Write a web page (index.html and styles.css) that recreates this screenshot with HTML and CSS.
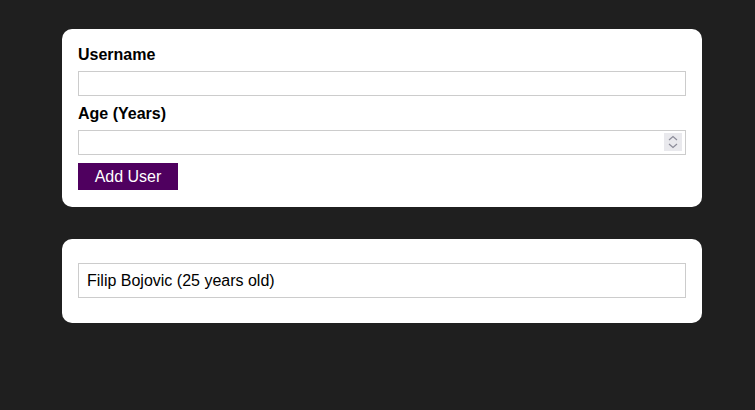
FILE: index.html
```html
<!DOCTYPE html>
<html>
<head>
<meta charset="utf-8">
<link rel="stylesheet" href="styles.css">
</head>
<body>
<div class="page">
  <form class="card form-card">
    <label class="label" for="username">Username</label>
    <input class="field" id="username" type="text">
    <label class="label" for="age">Age (Years)</label>
    <div class="num-wrap">
      <input class="field" id="age" type="text">
      <span class="spin">
        <svg width="18" height="18" viewBox="0 0 18 18"><path d="M5 7 L9 3.5 L13 7" fill="none" stroke="#8c8c99" stroke-width="1.2"/><path d="M5 11 L9 14.5 L13 11" fill="none" stroke="#8c8c99" stroke-width="1.2"/></svg>
      </span>
    </div>
    <button class="btn" type="button">Add User</button>
  </form>
  <div class="card list-card">
    <ul class="users">
      <li class="user">Filip Bojovic (25 years old)</li>
    </ul>
  </div>
</div>
</body>
</html>
```
FILE: styles.css
```css
* { box-sizing: border-box; }
html, body { margin: 0; padding: 0; }
body {
  background: #1f1f1f;
  font-family: "Liberation Sans", Arial, sans-serif;
  font-size: 16px;
  color: #000;
}
.page {
  width: 640px;
  margin: 29px auto 0 62px;
  display: flex;
  flex-direction: column;
  gap: 32px;
}
.card {
  background: #fff;
  border-radius: 10px;
}
.form-card {
  padding: 16px 16px 17px;
  display: flex;
  flex-direction: column;
  align-items: flex-start;
}
.label {
  font-weight: bold;
  line-height: 18px;
  padding-top: 1px;
  margin-bottom: 7px;
}
.field {
  width: 608px;
  height: 25px;
  border: 1px solid #ccc;
  font: inherit;
  padding: 0 4px;
  margin: 0 0 8px;
  outline: none;
}
.num-wrap {
  position: relative;
  width: 608px;
}
.spin {
  position: absolute;
  right: 4px;
  top: 3px;
  width: 18px;
  height: 18px;
  background: #e9e9ed;
  display: flex;
}
.btn {
  width: 100px;
  height: 27px;
  background: #4f005f;
  border: 1px solid #4f005f;
  color: #fff;
  font: inherit;
  padding: 0;
  cursor: pointer;
}
.list-card {
  padding: 16px 16px 17px;
}
.users {
  list-style: none;
  margin: 0;
  padding: 0;
}
.user {
  margin: 8px 0;
  border: 1px solid #ccc;
  height: 35px;
  line-height: 33px;
  padding: 0 8px;
}
```
